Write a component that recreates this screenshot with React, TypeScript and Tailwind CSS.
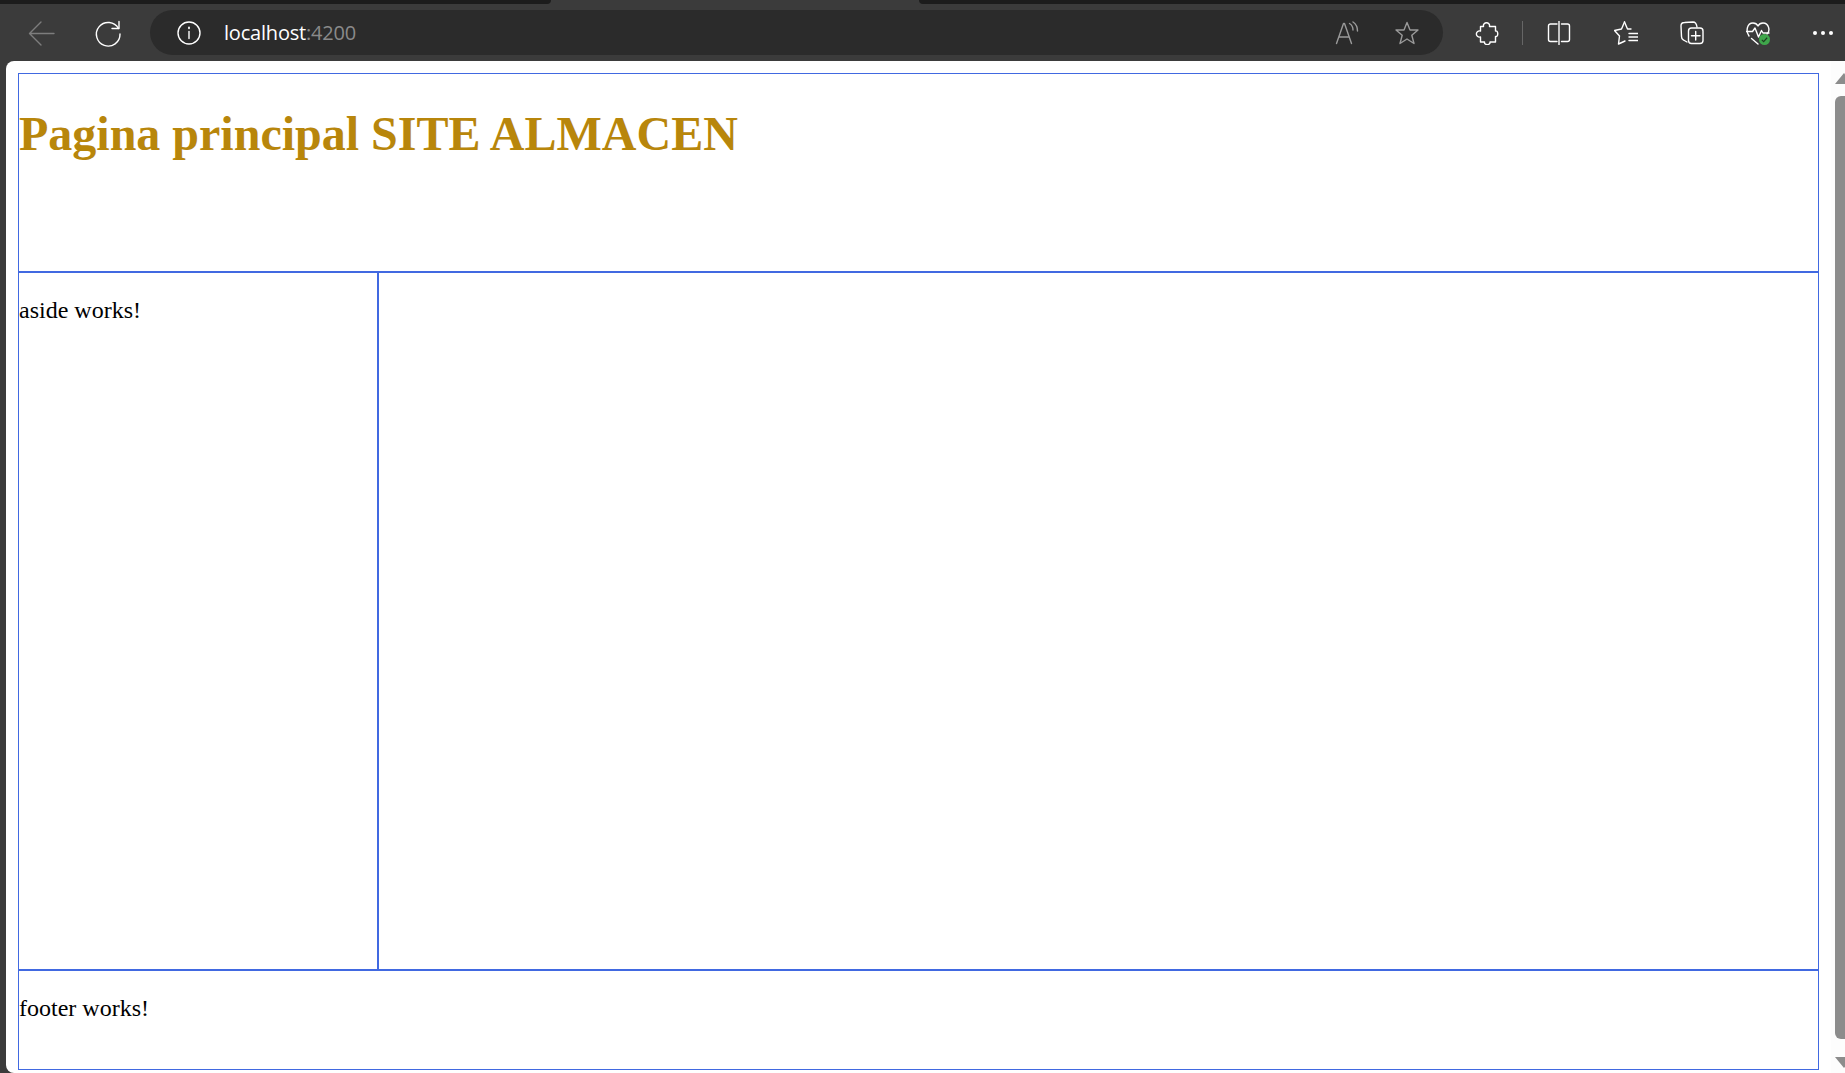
export default function App() {
  const stroke = { fill: "none", stroke: "currentColor", strokeWidth: 1.4, strokeLinecap: "round" as const, strokeLinejoin: "round" as const };
  return (
    <div className="flex h-screen w-full flex-col overflow-hidden bg-[#3b3b3b]">
      <div className="flex h-1 shrink-0">
        <div className="w-[551px] rounded-br-md bg-[#1c1c1c]" />
        <div className="w-[368px]" />
        <div className="flex-1 rounded-bl-md bg-[#1c1c1c]" />
      </div>
      <div className="flex h-[57px] shrink-0 items-center text-white">
        <div className="ml-[25px] w-8 text-[#7d7d7d]">
          <svg width="32" height="32" viewBox="0 0 32 32" {...stroke}>
            <path d="M29 16.500H5M16 5L4.500 16.500L16 28" />
          </svg>
        </div>
        <div className="ml-[35px] w-8">
          <svg width="32" height="32" viewBox="0 0 32 32" {...stroke}>
            <path d="M26.500 11.500A11.800 11.800 0 1 0 28 17" />
            <path d="M27 4.500V11.500H20" />
          </svg>
        </div>
        <div className="ml-[26px] flex h-[45px] w-[1293px] items-center rounded-full bg-[#2b2b2b]">
          <div className="ml-[27px] w-6">
            <svg width="24" height="24" viewBox="0 0 24 24" {...stroke}>
              <circle cx="12" cy="12" r="11" />
              <path d="M12 10.500V17.500" />
              <path d="M12 6.500V7.300" strokeWidth="1.8" />
            </svg>
          </div>
          <div className="ml-[23px] font-['Open_Sans',sans-serif] text-[20px] leading-none tracking-[-0.2px]">
            localhost<span className="text-[#8a8a8a]">:4200</span>
          </div>
          <div className="ml-auto w-6 text-[#9a9a9a]">
            <svg width="24" height="24" viewBox="0 0 24 24" {...stroke}>
              <path d="M1.500 22.500L8.500 2.500H9.500L16.500 22.500M4 16H14" />
              <path d="M14.500 2.500C17 4 18 6 18 9M18 1C21 3 22.500 6 22.500 10" />
            </svg>
          </div>
          <div className="ml-9 mr-6 w-6 text-[#9a9a9a]">
            <svg width="24" height="24" viewBox="0 0 24 24" {...stroke}>
              <path d="M12 1.500L15 9H23L16.800 14.200L19 22.500L12 18L5 22.500L7.200 14.200L1 9H9Z" />
            </svg>
          </div>
        </div>
        <div className="ml-8 w-6">
          <svg width="24" height="24" viewBox="0 0 24 24" {...stroke}>
            <path d="M8.500 5.500C7.500 0.500 15.500 0.500 14.500 5.500H20.500V10C23.500 9 23.500 16.500 20.500 15.500V21H15C15.500 24.500 9 24.500 9.500 21H5.500V16C0 17 0 9 5.500 10V5.500Z" />
          </svg>
        </div>
        <div className="ml-[23px] h-6 w-px bg-[#666666]" />
        <div className="ml-6 w-6">
          <svg width="24" height="24" viewBox="0 0 24 24" {...stroke}>
            <path d="M10 3H3.500A2 2 0 0 0 1.500 5V18.500A2 2 0 0 0 3.500 20.500H10" />
            <path d="M14.500 3H20.500A2 2 0 0 1 22.500 5V18.500A2 2 0 0 1 20.500 20.500H14.500" />
            <path d="M12 0.500V23.500" />
          </svg>
        </div>
        <div className="ml-[43px] w-6">
          <svg width="24" height="24" viewBox="0 0 24 24" {...stroke}>
            <path d="M10.500 1L7.500 8L0.500 9.500L5.500 15L4.500 23L11 20" />
            <path d="M10.500 1L13.500 8H17M15 12.500H24M15 16H24M15 19.500H24" />
          </svg>
        </div>
        <div className="ml-[42px] w-6">
          <svg width="24" height="24" viewBox="0 0 24 24" {...stroke}>
            <path d="M7 21L3.500 19C2 18.500 1.500 17 1.500 15.500L1 5C1 3 2.500 1.500 4.500 1.500L13 1C15 1 16.500 2.500 17 6" />
            <rect x="8.500" y="7" width="14.500" height="15.500" rx="3" />
            <path d="M15.700 10.500V19M11.500 14.800H20" />
          </svg>
        </div>
        <div className="relative ml-[42px] w-6">
          <svg width="24" height="24" viewBox="0 0 24 24" {...stroke}>
            <path d="M3 15C-0.500 10 1 2 7 2C10 2 11.500 4 12 5C13 3 15 2 17 2C23 2 24.500 10 21 13" />
            <path d="M0.500 10.500H6.500L9 7L12.500 16L15.500 9.500L17 12H23" />
            <path d="M5.500 17.500L12 23" />
          </svg>
          <div className="absolute left-[13px] top-[13px] flex h-[11px] w-[11px] items-center justify-center rounded-full bg-[#3fa64b]">
            <svg width="7" height="7" viewBox="0 0 8 8" fill="none" stroke="#1f3d22" strokeWidth="1.300">
              <path d="M1 4.500L3 6.500L7 2" />
            </svg>
          </div>
        </div>
        <div className="ml-[41px] flex w-6 justify-center gap-[4px]">
          <div className="h-1 w-1 rounded-full bg-white" />
          <div className="h-1 w-1 rounded-full bg-white" />
          <div className="h-1 w-1 rounded-full bg-white" />
        </div>
      </div>
      <div className="ml-[6px] flex min-h-0 flex-1 overflow-hidden rounded-l-lg bg-white font-['Liberation_Serif',serif] text-black">
        <div className="flex min-w-0 flex-1 flex-col pb-[3px] pl-3 pr-[12px] pt-3">
          <header className="h-[199px] shrink-0 overflow-hidden border border-[#4169e1]">
            <h1 className="my-8 text-[48px] font-bold leading-[55px] text-[#b8860b]">Pagina principal SITE ALMACEN</h1>
          </header>
          <div className="flex min-h-0 flex-1">
            <aside className="w-[360px] shrink-0 border border-[#4169e1]">
              <p className="my-6 text-2xl leading-[27px]">aside works!</p>
            </aside>
            <main className="min-w-0 flex-1 border border-[#4169e1]" />
          </div>
          <footer className="h-[100px] shrink-0 overflow-hidden border border-[#4169e1]">
            <p className="my-6 text-2xl leading-[27px]">footer works!</p>
          </footer>
        </div>
        <div className="flex w-[14px] shrink-0 flex-col items-start overflow-hidden bg-[#fdfdfd] pb-[5px] pl-[4px] pt-3">
          <div className="h-0 w-0 border-x-[9px] border-b-[11px] border-x-transparent border-b-[#8c8c8c]" />
          <div className="mt-3 w-[10px] flex-1 rounded-l-md bg-[#8c8c8c]" />
          <div className="mt-[18px] h-0 w-0 border-x-[9px] border-t-[11px] border-x-transparent border-t-[#8c8c8c]" />
        </div>
      </div>
    </div>
  );
}
